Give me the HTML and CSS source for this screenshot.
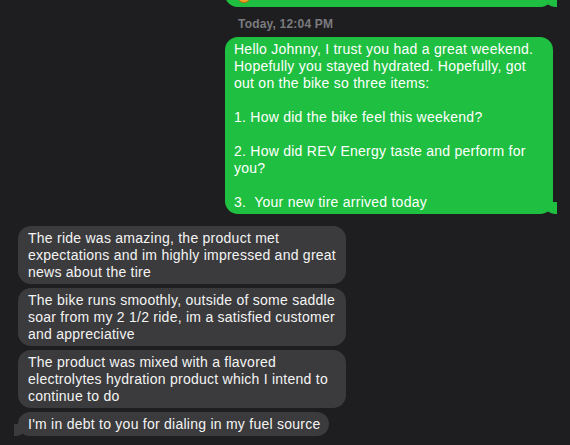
FILE: index.html
```html
<!DOCTYPE html>
<html>
<head>
<meta charset="utf-8">
<link rel="stylesheet" href="styles.css">
</head>
<body>
<div class="thread">
  <div class="sent-group">
    <div class="bubble sent top-bubble"><div class="emoji"></div></div>
    <div class="timestamp">Today, 12:04 PM</div>
    <div class="bubble sent tail-right">Hello Johnny, I trust you had a great weekend. Hopefully you stayed hydrated. Hopefully, got out on the bike so three items:<br><br>1. How did the bike feel this weekend?<br><br>2. How did REV Energy taste and perform for you?<br><br>3.&nbsp; Your new tire arrived today</div>
  </div>
  <div class="received-group">
    <div class="bubble received">The ride was amazing, the product met expectations and im highly impressed and great news about the tire</div>
    <div class="bubble received">The bike runs smoothly, outside of some saddle soar from my 2 1/2 ride, im a satisfied customer and appreciative</div>
    <div class="bubble received">The product was mixed with a flavored electrolytes hydration product which I intend to continue to do</div>
    <div class="bubble received tail-left">I'm in debt to you for dialing in my fuel source</div>
  </div>
</div>
</body>
</html>
```
FILE: styles.css
```css
html, body {
  margin: 0;
  padding: 0;
  background: #1e1e20;
  width: 570px;
  height: 445px;
  overflow: hidden;
  font-family: "Liberation Sans", Arial, sans-serif;
}

.thread {
  display: flex;
  flex-direction: column;
  padding: 0 17px 0 18px;
}

.sent-group {
  align-self: flex-end;
  width: 328px;
  display: flex;
  flex-direction: column;
}

.bubble {
  position: relative;
  box-sizing: border-box;
  max-width: 328px;
  padding: 4px 9px 3px 10px;
  border-radius: 13px;
  font-size: 14px;
  line-height: 17px;
  letter-spacing: 0.25px;
}

.sent {
  background: #1fbf41;
  color: #ffffff;
  padding-left: 9px;
}

.received {
  background: #3b3b3d;
  color: #f4f4f4;
}

.top-bubble {
  margin-top: -18px;
  height: 25px;
}

.emoji {
  width: 12px;
  height: 12px;
  margin: 3px 0 0 3px;
  border-radius: 50%;
  background: #f3a425;
  border: 1px solid #b86d12;
}

.timestamp {
  margin: 11px 0 6px 13px;
  font-size: 12px;
  line-height: 13px;
  font-weight: 700;
  letter-spacing: 0.2px;
  color: #7b7b7f;
}

.received-group {
  margin-top: 12px;
  display: flex;
  flex-direction: column;
  align-items: flex-start;
  gap: 4px;
}

.tail-right::before,
.top-bubble::before {
  content: "";
  position: absolute;
  bottom: 0;
  right: -4px;
  width: 12px;
  height: 12px;
  background: #1fbf41;
  border-bottom-left-radius: 10px 9px;
}

.tail-right::after,
.top-bubble::after {
  content: "";
  position: absolute;
  bottom: 0;
  right: -10px;
  width: 6px;
  height: 12px;
  background: #1e1e20;
  border-bottom-left-radius: 5px;
}

.tail-left::before {
  content: "";
  position: absolute;
  bottom: 0;
  left: -4px;
  width: 12px;
  height: 12px;
  background: #3b3b3d;
  border-bottom-right-radius: 10px 9px;
}

.tail-left::after {
  content: "";
  position: absolute;
  bottom: 0;
  left: -10px;
  width: 6px;
  height: 12px;
  background: #1e1e20;
  border-bottom-right-radius: 5px;
}
```
